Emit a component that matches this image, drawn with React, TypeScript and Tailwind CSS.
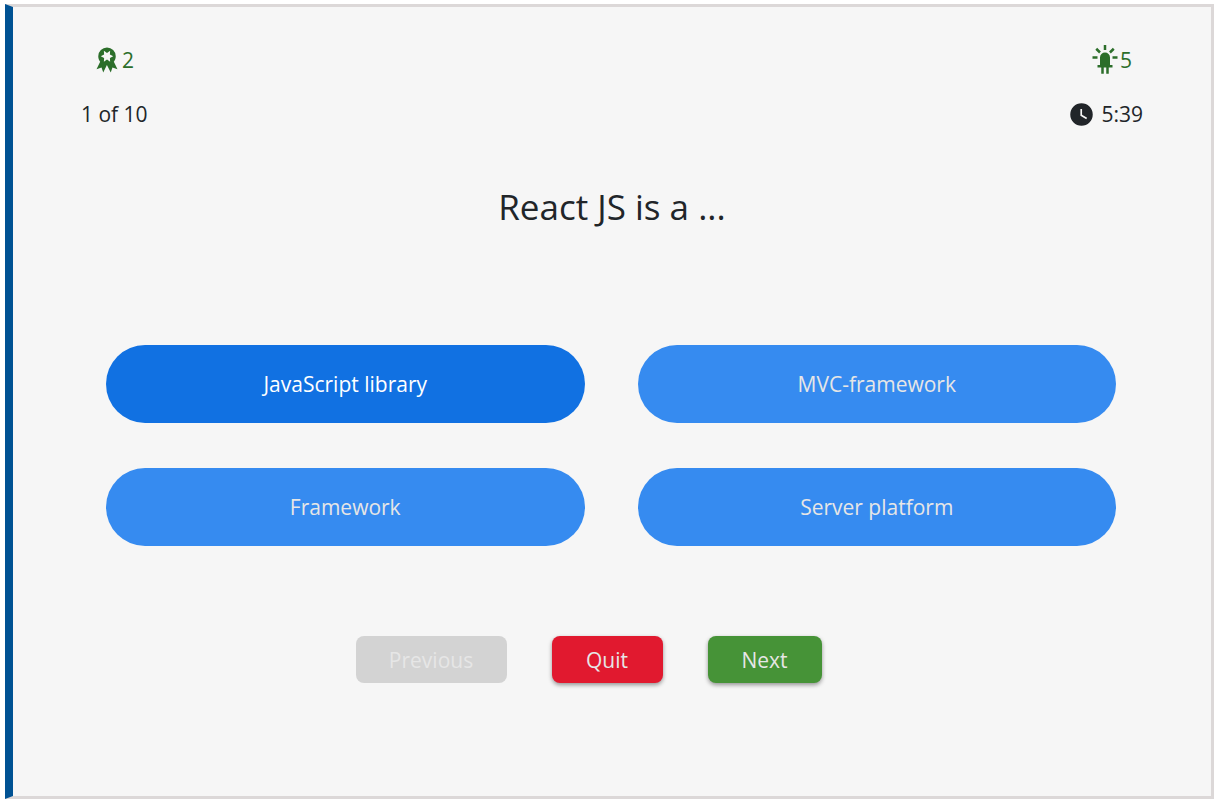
import { useState } from "react";

type IconProps = { path: string; className: string };

const SEAL =
  "M20.39,19.37L16.38,18L15,22L11.92,16L9,22L7.62,18L3.61,19.37L6.53,13.37C5.57,12.17 5,10.65 5,9A7,7 0 0,1 12,2A7,7 0 0,1 19,9C19,10.65 18.43,12.17 17.47,13.37L20.39,19.37M7,9L9.69,10.34L9.5,13.34L12,11.68L14.5,13.33L14.33,10.34L17,9L14.32,7.65L14.5,4.67L12,6.31L9.5,4.65L9.67,7.66L7,9Z";
const LED =
  "M11,0V4H13V0H11M18.3,2.29L15.24,5.29L16.64,6.71L19.7,3.71L18.3,2.29M5.71,2.29L4.29,3.71L7.29,6.71L8.71,5.29L5.71,2.29M12,6A4,4 0 0,0 8,10V16H6V18H9V23H11V18H13V23H15V18H18V16H16V10A4,4 0 0,0 12,6M2,9V11H6V9H2M18,9V11H22V9H18Z";
const CLOCK =
  "M12,2A10,10 0 0,0 2,12A10,10 0 0,0 12,22A10,10 0 0,0 22,12A10,10 0 0,0 12,2M16.2,16.2L11,13V7H12.5V12.2L17,14.9L16.2,16.2Z";

function Icon({ path, className }: IconProps) {
  return (
    <svg viewBox="0 0 24 24" fill="currentColor" aria-hidden="true" className={className}>
      <path d={path} />
    </svg>
  );
}

const options = ["JavaScript library", "MVC-framework", "Framework", "Server platform"];

export default function App() {
  const [selected, setSelected] = useState(0);

  return (
    <div className="flex min-h-screen bg-white pt-1 pr-2 pb-[5px] pl-[5px] font-['Open_Sans','Noto_Sans',sans-serif] text-[21px] leading-[30px] text-[#212529]">
      <main className="flex-1 border-[3px] border-l-8 border-[#dcd8d8] border-l-[#005293] bg-[#f6f6f6] px-[68px] pt-[38px]">
        <div className="flex justify-between px-[11px] text-[#2c6e2a]">
          <p className="flex items-center">
            <Icon path={SEAL} className="size-[30px]" />
            2
          </p>
          <p className="flex items-center">
            <Icon path={LED} className="size-[30px]" />
            5
          </p>
        </div>
        <div className="mt-6 flex justify-between">
          <p>1 of 10</p>
          <p className="flex items-center gap-1.5">
            <Icon path={CLOCK} className="size-[27px]" />
            5:39
          </p>
        </div>
        <h1 className="mt-14 text-center text-[35px] leading-[44px] font-normal">React JS is a ...</h1>
        <div className="mt-[116px] mr-[27px] ml-[25px] grid grid-cols-2 gap-x-[53px] gap-y-[45px]">
          {options.map((option, index) => (
            <button
              key={option}
              type="button"
              aria-pressed={selected === index}
              onClick={() => setSelected(index)}
              className={
                selected === index
                  ? "h-[78px] rounded-full bg-[#1171e2] text-white"
                  : "h-[78px] rounded-full bg-[#368bf0] text-[#e6e6e6]"
              }
            >
              {option}
            </button>
          ))}
        </div>
        <div className="mt-[90px] flex justify-center gap-[45px] pr-[47px] text-[#e6e6e6]">
          <button type="button" disabled className="h-[47px] w-[151px] rounded-lg bg-[#d3d3d3]">
            Previous
          </button>
          <button type="button" className="h-[47px] w-[111px] rounded-lg bg-[#e1192f] shadow-[0_2px_4px_rgba(0,0,0,0.4)]">
            Quit
          </button>
          <button type="button" className="h-[47px] w-[114px] rounded-lg bg-[#469337] shadow-[0_2px_4px_rgba(0,0,0,0.4)]">
            Next
          </button>
        </div>
      </main>
    </div>
  );
}
